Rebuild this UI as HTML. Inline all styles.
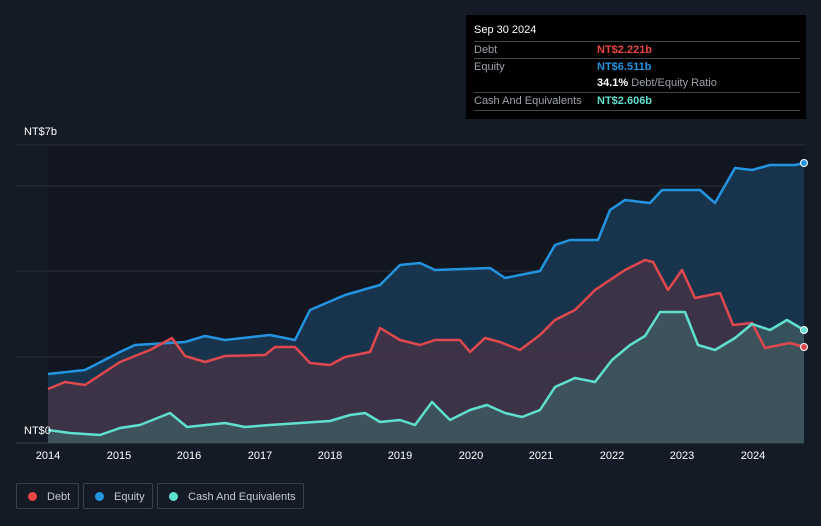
<!DOCTYPE html>
<html><head><meta charset="utf-8"><style>
body{margin:0;width:821px;height:526px;background:#151b26;font-family:"Liberation Sans",sans-serif;overflow:hidden;position:relative}
.tt{position:absolute;left:466px;top:15px;width:340px;height:104px;background:#000;color:#fff;font-size:11px}
.tt .r{position:absolute;left:8px;right:6px;border-top:1px solid #444;height:17px;line-height:17px}
.tt .l{color:#9ea3ab}
.tt .v{position:absolute;left:123px;top:0;font-weight:bold;white-space:nowrap}
.leg{position:absolute;top:483px;height:26px;border:1px solid #3a404b;border-radius:2px;color:#c7cad0;font-size:11px;line-height:26px;box-sizing:border-box;white-space:nowrap}
.leg i{display:inline-block;width:9px;height:9px;border-radius:50%;margin:0 10px 0 11px;vertical-align:-1px}
.yr{position:absolute;top:450px;color:#fff;font-size:11px;width:40px;text-align:center}
</style></head><body>
<svg width="821" height="526" style="position:absolute;left:0;top:0">
<rect x="48" y="145" width="756" height="298" fill="#111620"/>
<line x1="16" y1="145" x2="804" y2="145" stroke="#2a303a"/>
<line x1="16" y1="186" x2="804" y2="186" stroke="#2a303a"/>
<line x1="16" y1="271" x2="804" y2="271" stroke="#2a303a"/>
<line x1="16" y1="357" x2="804" y2="357" stroke="#2a303a"/>
<line x1="16" y1="443" x2="804" y2="443" stroke="#3a404b"/>
<path d="M48,374 L85,370 L120,352 L135,345 L185,342 L205,336 L225,340 L270,335 L295,340 L310,310 L345,295 L380,285 L400,265 L420,263 L435,270 L490,268 L505,278 L540,271 L555,245 L570,240 L598,240 L610,210 L625,200 L650,203 L662,190 L700,190 L715,203 L735,168 L752,170 L770,165 L795,165 L804,163 L804,443 L48,443Z" fill="#1a3a55" fill-opacity="0.85"/>
<path d="M48,389 L65,382 L85,385 L120,362 L150,350 L172,338 L185,356 L205,362 L225,356 L265,355 L275,347 L295,347 L310,363 L330,365 L345,357 L370,352 L380,328 L400,340 L420,345 L435,340 L460,340 L470,352 L485,338 L500,342 L520,350 L540,335 L555,320 L575,310 L595,290 L625,270 L645,260 L653,262 L668,290 L682,270 L695,298 L720,293 L733,325 L752,323 L765,348 L790,343 L804,347 L804,443 L48,443Z" fill="#4a3344" fill-opacity="0.75"/>
<path d="M48,430 L70,433 L100,435 L120,428 L140,425 L170,413 L187,427 L225,423 L245,427 L270,425 L300,423 L330,421 L350,415 L365,413 L380,422 L400,420 L415,425 L432,402 L450,420 L470,410 L487,405 L505,413 L522,417 L540,410 L555,387 L575,378 L595,382 L612,360 L630,345 L645,336 L660,312 L685,312 L698,345 L715,350 L735,338 L752,324 L770,330 L787,320 L804,330 L804,443 L48,443Z" fill="#3d5a60" fill-opacity="0.8"/>
<g fill="none" stroke-width="2.5" stroke-linejoin="round">
<path d="M48,374 L85,370 L120,352 L135,345 L185,342 L205,336 L225,340 L270,335 L295,340 L310,310 L345,295 L380,285 L400,265 L420,263 L435,270 L490,268 L505,278 L540,271 L555,245 L570,240 L598,240 L610,210 L625,200 L650,203 L662,190 L700,190 L715,203 L735,168 L752,170 L770,165 L795,165 L804,163" stroke="#2394e0"/>
<path d="M48,389 L65,382 L85,385 L120,362 L150,350 L172,338 L185,356 L205,362 L225,356 L265,355 L275,347 L295,347 L310,363 L330,365 L345,357 L370,352 L380,328 L400,340 L420,345 L435,340 L460,340 L470,352 L485,338 L500,342 L520,350 L540,335 L555,320 L575,310 L595,290 L625,270 L645,260 L653,262 L668,290 L682,270 L695,298 L720,293 L733,325 L752,323 L765,348 L790,343 L804,347" stroke="#e0484f"/>
<path d="M48,430 L70,433 L100,435 L120,428 L140,425 L170,413 L187,427 L225,423 L245,427 L270,425 L300,423 L330,421 L350,415 L365,413 L380,422 L400,420 L415,425 L432,402 L450,420 L470,410 L487,405 L505,413 L522,417 L540,410 L555,387 L575,378 L595,382 L612,360 L630,345 L645,336 L660,312 L685,312 L698,345 L715,350 L735,338 L752,324 L770,330 L787,320 L804,330" stroke="#5fe0cf"/>
</g>
<circle cx="804" cy="163" r="3.5" fill="#2394e0" stroke="#fff"/>
<circle cx="804" cy="347" r="3.5" fill="#e0484f" stroke="#fff"/>
<circle cx="804" cy="330" r="3.5" fill="#5fe0cf" stroke="#fff"/>
</svg>
<div style="position:absolute;left:24px;top:126px;color:#fff;font-size:11px">NT$7b</div>
<div style="position:absolute;left:24px;top:425px;color:#fff;font-size:11px">NT$0</div>
<div class="yr" style="left:28px">2014</div><div class="yr" style="left:99px">2015</div><div class="yr" style="left:169px">2016</div><div class="yr" style="left:240px">2017</div><div class="yr" style="left:310px">2018</div><div class="yr" style="left:380px">2019</div><div class="yr" style="left:451px">2020</div><div class="yr" style="left:521px">2021</div><div class="yr" style="left:592px">2022</div><div class="yr" style="left:662px">2023</div><div class="yr" style="left:733px">2024</div>
<div class="tt">
<div style="position:absolute;left:8px;top:9px;font-size:11px">Sep 30 2024</div>
<div class="r" style="top:26px"><span class="l">Debt</span><span class="v" style="color:#e84545">NT$2.221b</span></div>
<div class="r" style="top:43px"><span class="l">Equity</span><span class="v" style="color:#2394e0">NT$6.511b</span></div>
<div class="r" style="top:60px;border-top:none"><span class="v">34.1% <span style="color:#9ea3ab;font-weight:normal">Debt/Equity Ratio</span></span></div>
<div class="r" style="top:77px"><span class="l">Cash And Equivalents</span><span class="v" style="color:#5fe0cf">NT$2.606b</span></div>
<div class="r" style="top:95px;height:0"></div>
</div>
<div class="leg" style="left:16px;width:63px"><i style="background:#e84545"></i>Debt</div>
<div class="leg" style="left:83px;width:70px"><i style="background:#2394e0"></i>Equity</div>
<div class="leg" style="left:157px;width:147px"><i style="background:#5fe0cf"></i>Cash And Equivalents</div>
</body></html>
